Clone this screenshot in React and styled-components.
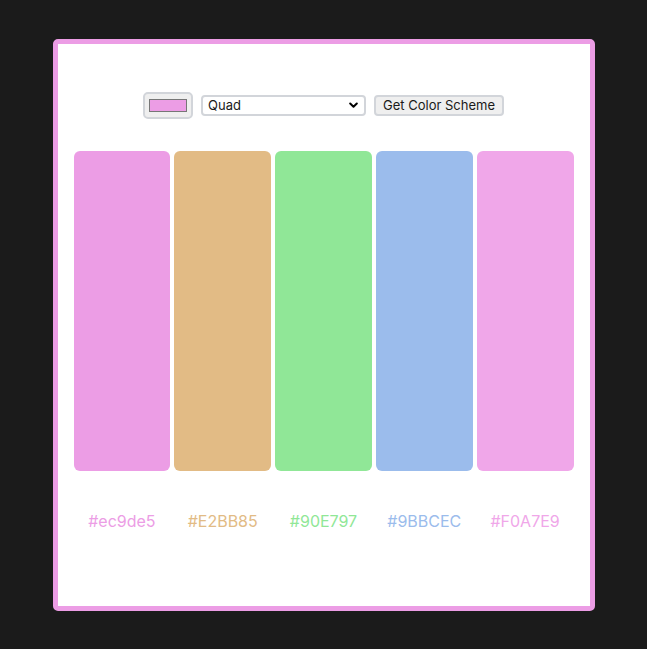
import React, { useState } from "react";
import styled, { createGlobalStyle } from "styled-components";

const Global = createGlobalStyle`
  html, body { margin: 0; padding: 0; background: #1b1b1b; }
  body { font-family: Inter, "Noto Sans", sans-serif; }
  #root { min-height: 100vh; display: flex; align-items: center; justify-content: center; }
`;

const Card = styled.div`
  box-sizing: border-box;
  width: 542px;
  height: 572px;
  background: #ffffff;
  border: 5px solid ${(p) => p.$accent};
  border-radius: 5px;
  padding: 48px 16px 0;
  display: flex;
  flex-direction: column;
  align-items: center;
`;

const Controls = styled.div`
  display: flex;
  align-items: center;
  gap: 8px;
  height: 27px;
`;

const ColorInput = styled.input`
  -webkit-appearance: none;
  appearance: none;
  box-sizing: border-box;
  width: 50px;
  height: 27px;
  margin: 0;
  padding: 1px 2px;
  border: 2px solid #d2d5da;
  border-radius: 5px;
  background: #efefef;
  cursor: pointer;
  &::-webkit-color-swatch-wrapper {
    padding: 4px 2px;
  }
  &::-webkit-color-swatch {
    border: 1px solid #777777;
    border-radius: 0;
  }
`;

const SelectWrap = styled.div`
  position: relative;
  display: flex;
`;

const ModeSelect = styled.select`
  -webkit-appearance: none;
  appearance: none;
  box-sizing: border-box;
  width: 165px;
  height: 21px;
  margin: 0;
  padding: 0 20px 0 5px;
  border: 2px solid #d2d5da;
  border-radius: 4px;
  background: #ffffff;
  color: #1a1a1a;
  font-family: Inter, sans-serif;
  font-size: 13px;
  line-height: 17px;
  outline: none;
`;

const Chevron = styled.svg`
  position: absolute;
  right: 8px;
  top: 7px;
  width: 9px;
  height: 7px;
  pointer-events: none;
`;

const FetchButton = styled.button`
  box-sizing: border-box;
  height: 21px;
  margin: 0;
  padding: 0 7px;
  border: 2px solid #d2d5da;
  border-radius: 4px;
  background: #efefef;
  color: #1a1a1a;
  font-family: Inter, sans-serif;
  font-size: 13px;
  line-height: 17px;
  cursor: pointer;
`;

const Swatches = styled.div`
  margin-top: 32px;
  width: 100%;
  display: grid;
  grid-template-columns: repeat(5, 1fr);
  gap: 4px;
`;

const Swatch = styled.div`
  height: 320px;
  border-radius: 6px;
  background: ${(p) => p.$color};
`;

const Labels = styled.div`
  margin-top: 40px;
  width: 100%;
  display: grid;
  grid-template-columns: repeat(5, 1fr);
  gap: 4px;
`;

const Label = styled.p`
  margin: 0;
  text-align: center;
  font-size: 16px;
  line-height: 20px;
  color: ${(p) => p.$color};
`;

const colors = ["#ec9de5", "#E2BB85", "#90E797", "#9BBCEC", "#F0A7E9"];

export default function App() {
  const [seed, setSeed] = useState("#ec9de5");
  const [mode, setMode] = useState("quad");
  return (
    <>
      <Global />
      <Card $accent={seed}>
        <Controls>
          <ColorInput type="color" value={seed} onChange={(e) => setSeed(e.target.value)} />
          <SelectWrap>
            <ModeSelect value={mode} onChange={(e) => setMode(e.target.value)}>
              <option value="monochrome">Monochrome</option>
              <option value="analogic">Analogic</option>
              <option value="complement">Complement</option>
              <option value="triad">Triad</option>
              <option value="quad">Quad</option>
            </ModeSelect>
            <Chevron viewBox="0 0 9 7" aria-hidden="true">
              <path d="M1.2 1.5 L4.5 4.8 L7.8 1.5" fill="none" stroke="#000" strokeWidth="2" strokeLinecap="round" strokeLinejoin="round" />
            </Chevron>
          </SelectWrap>
          <FetchButton type="button">Get Color Scheme</FetchButton>
        </Controls>
        <Swatches>
          {colors.map((c) => (
            <Swatch key={c} $color={c} />
          ))}
        </Swatches>
        <Labels>
          {colors.map((c) => (
            <Label key={c} $color={c}>{c}</Label>
          ))}
        </Labels>
      </Card>
    </>
  );
}
